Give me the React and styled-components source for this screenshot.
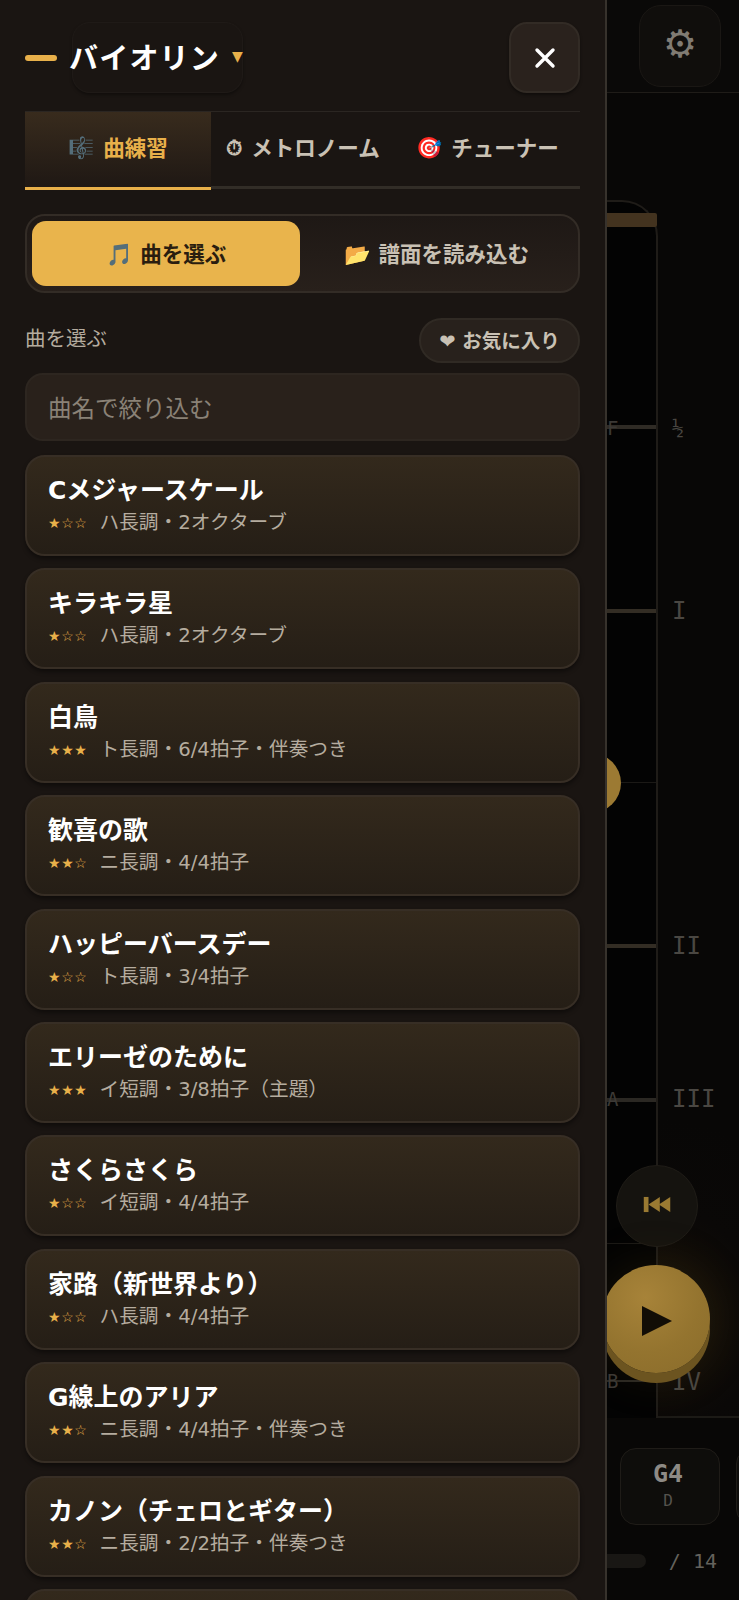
import React from "react";
import styled, { createGlobalStyle } from "styled-components";

const FONT = `"DejaVu Sans", "Noto Sans CJK JP", sans-serif`;
const MONO = `"DejaVu Sans Mono", "Liberation Mono", monospace`;

const Global = createGlobalStyle`
  * { box-sizing: border-box; }
  html, body { margin: 0; padding: 0; background: #080706; }
  body { font-family: ${FONT}; }
`;

const Screen = styled.div`
  position: relative;
  width: 739px;
  height: 1600px;
  overflow: hidden;
  background: #080706;
  display: flex;
  flex-direction: column;
`;

/* ---------- dimmed app behind the drawer ---------- */
const TopBar = styled.header`
  height: 93px;
  flex: none;
  display: flex;
  justify-content: flex-end;
  padding: 5px 18px 0 0;
  border-bottom: 1px solid #1f1c18;
  background: #0a0908;
`;
const GearButton = styled.div`
  width: 82px;
  height: 82px;
  border-radius: 22px;
  border: 1px solid #1a1714;
  background: #100e0c;
  color: #807b73;
  display: flex;
  align-items: center;
  justify-content: center;
  padding-bottom: 5px;
  font-size: 38px;
  line-height: 1;
`;
const Stage = styled.section`
  position: relative;
  height: 1325px;
  flex: none;
  border-bottom: 2px solid #1c1a16;
  background: radial-gradient(circle at 655px 1226px, #181208 0, #0a0807 110px, #080706 200px);
`;
const Neck = styled.div`
  position: absolute;
  left: 300px;
  top: 107px;
  width: 358px;
  height: 1218px;
  border: 2px solid #1f1c18;
  border-bottom: 0;
  border-radius: 36px 36px 0 0;
  background: #030303;
`;
const Nut = styled.div`
  position: absolute;
  left: 300px;
  top: 120px;
  width: 357px;
  height: 14px;
  border-radius: 0 2px 2px 0;
  background: #43331f;
`;
const Fret = styled.div`
  position: absolute;
  left: 300px;
  width: 356px;
  height: ${(p) => p.$h}px;
  background: ${(p) => p.$c};
`;
const FretLabel = styled.span`
  position: absolute;
  left: 672px;
  transform: translateY(-50%);
  font: 24px ${MONO};
  color: #4a4742;
  line-height: 1;
`;
const StringNote = styled.span`
  position: absolute;
  left: 607px;
  transform: translateY(-50%);
  font: 19px ${MONO};
  color: #3c3935;
  line-height: 1;
`;
const Dot = styled.div`
  position: absolute;
  left: 560px;
  top: 660px;
  width: 61px;
  height: 60px;
  border-radius: 50%;
  background: #9c7a33;
`;
const RewindButton = styled.div`
  position: absolute;
  left: 616px;
  top: 1072px;
  width: 82px;
  height: 82px;
  border-radius: 50%;
  background: #15130f;
  border: 1px solid #1f1c17;
  display: flex;
  align-items: center;
  justify-content: center;
  padding-bottom: 4px;
  color: #9a7a32;
`;
const PlayButton = styled.div`
  position: absolute;
  left: 602px;
  top: 1172px;
  width: 108px;
  height: 108px;
  border-radius: 50%;
  background: radial-gradient(circle at 40% 30%, #a78339 0, #94742f 55%, #8a6c2b 100%);
  box-shadow: 0 10px 0 #6c5420, 0 0 50px rgba(120, 90, 30, 0.2);
  display: flex;
  align-items: center;
  justify-content: center;
`;
const NotesStrip = styled.div`
  flex: none;
  height: 122px;
  padding: 30px 0 0 504px;
  display: flex;
  gap: 16px;
  overflow: hidden;
`;
const NoteCard = styled.div`
  width: 100px;
  height: 77px;
  flex: none;
  border: 1px solid #1f1c18;
  border-radius: 16px;
  background: #0e0d0b;
  display: flex;
  flex-direction: column;
  align-items: center;
  justify-content: flex-start;
  padding: 10px 4px 0 0;
  font-family: ${MONO};
`;
const NoteName = styled.span`
  font-size: 25px;
  font-weight: 700;
  color: #8d8a85;
  line-height: 30px;
`;
const NoteFinger = styled.span`
  font-size: 16px;
  color: #55534e;
  line-height: 23px;
`;
const ProgressRow = styled.div`
  flex: 1;
  display: flex;
  align-items: flex-start;
  padding: 8px 22px 0 300px;
  gap: 23px;
`;
const ProgressTrack = styled.div`
  flex: 1;
  height: 14px;
  margin-top: 6px;
  border-radius: 7px;
  background: #191714;
`;
const ProgressCount = styled.span`
  font: 20px ${MONO};
  color: #64625c;
  line-height: 26px;
  white-space: pre;
`;

/* ---------- drawer ---------- */
const Drawer = styled.aside`
  position: absolute;
  left: 0;
  top: 0;
  width: 607px;
  height: 1600px;
  overflow: hidden;
  padding: 0 25px;
  background: #1a1512;
  border-right: 2px solid #37322c;
  display: flex;
  flex-direction: column;
`;
const DrawerHeader = styled.div`
  height: 111px;
  flex: none;
  display: flex;
  align-items: flex-start;
  padding-top: 22px;
`;
const Handle = styled.span`
  width: 32px;
  height: 6px;
  margin-top: 33px;
  border-radius: 3px;
  background: #e8b04a;
`;
const InstrumentButton = styled.div`
  margin-left: 15px;
  width: 171px;
  height: 71px;
  padding-bottom: 4px;
  border-radius: 18px;
  border: 1px solid #1f1a17;
  box-shadow: 0 2px 3px rgba(0, 0, 0, 0.35);
  display: flex;
  align-items: center;
  color: #fff;
  font-size: 29px;
  font-weight: 700;
  letter-spacing: 1.2px;
  white-space: nowrap;
`;
const InstrumentName = styled.span`
  margin-left: -4px;
`;
const Caret = styled.span`
  margin-left: 12px;
  font-size: 14px;
  letter-spacing: 0;
  color: #e8b04a;
`;
const CloseButton = styled.div`
  margin-left: auto;
  width: 71px;
  height: 71px;
  border-radius: 18px;
  border: 2px solid #322b25;
  background: #2a221d;
  box-shadow: 0 2px 3px rgba(0, 0, 0, 0.4);
  display: flex;
  align-items: center;
  justify-content: center;
  color: #fff;
`;
const Tabs = styled.nav`
  height: 78px;
  flex: none;
  display: grid;
  grid-template-columns: 186px 1fr 185px;
  border-top: 1px solid #2b2622;
  border-bottom: 3px solid #322d27;
`;
const Tab = styled.div`
  height: 78px;
  margin-bottom: -3px;
  display: flex;
  align-items: center;
  justify-content: center;
  gap: 9px;
  font-size: 21.5px;
  font-weight: 700;
  white-space: nowrap;
  padding-bottom: 6px;
  color: ${(p) => (p.$active ? "#e8b04a" : "#c9c1b4")};
  background: ${(p) => (p.$active ? "linear-gradient(180deg, #382b1d, #1f1814)" : "transparent")};
  border-bottom: 3px solid ${(p) => (p.$active ? "#e8b04a" : "transparent")};
`;
const TabIcon = styled.span`
  font-size: 21px;
  font-weight: 700;
  margin-top: 3px;
`;
const ModeToggle = styled.div`
  margin-top: 25px;
  height: 79px;
  flex: none;
  display: grid;
  grid-template-columns: 268px 1fr;
  padding: 5px;
  border: 2px solid #332c26;
  border-radius: 20px;
  background: linear-gradient(180deg, #1e1815, #28201b);
`;
const ModeButton = styled.div`
  display: flex;
  align-items: center;
  justify-content: center;
  padding-bottom: 3px;
  border-radius: 14px;
  font-size: 21.5px;
  font-weight: 700;
  white-space: pre;
  color: ${(p) => (p.$active ? "#2a1d0f" : "#c9c1b4")};
  background: ${(p) => (p.$active ? "#e9b44c" : "transparent")};
`;
const LabelRow = styled.div`
  margin-top: 25px;
  height: 45px;
  flex: none;
  display: flex;
  align-items: center;
  justify-content: space-between;
`;
const SectionLabel = styled.span`
  font-size: 20.5px;
  color: #b5ac9f;
  margin-top: -7px;
`;
const FavButton = styled.div`
  width: 161px;
  height: 45px;
  padding-bottom: 3px;
  border-radius: 23px;
  border: 2px solid #302a24;
  background: #28211c;
  display: flex;
  align-items: center;
  justify-content: center;
  gap: 6px;
  color: #c9c1b4;
  font-size: 19.5px;
  font-weight: 700;
  white-space: nowrap;
`;
const SearchInput = styled.input`
  margin-top: 10px;
  width: 100%;
  height: 68px;
  flex: none;
  padding: 3px 21px 0;
  border: 2px solid #2d2620;
  border-radius: 18px;
  background: #29211b;
  outline: none;
  color: #fff;
  font-family: ${FONT};
  font-size: 23.5px;
  &::placeholder { color: #8a8277; opacity: 1; }
`;
const SongList = styled.div`
  margin-top: 14px;
  display: flex;
  flex-direction: column;
  gap: 12.4px;
`;
const SongCard = styled.div`
  height: 101px;
  flex: none;
  padding: 17px 21px 0;
  border: 2px solid #372e25;
  border-radius: 20px;
  background: linear-gradient(180deg, #33291c, #251e16);
  box-shadow: 0 3px 4px rgba(0, 0, 0, 0.4);
`;
const SongTitle = styled.div`
  font-size: 25px;
  font-weight: 700;
  line-height: 33px;
  color: #fff;
  white-space: nowrap;
`;
const SongMeta = styled.div`
  display: flex;
  align-items: center;
  gap: 12px;
  margin-top: 2px;
  font-size: 19.7px;
  line-height: 28px;
  color: #b5ac9f;
  white-space: nowrap;
`;
const Stars = styled.span`
  font-size: 14px;
  letter-spacing: 0.6px;
  color: #e8b04a;
`;

const Rating = ({ n }) => (
  <Stars>
    {"★".repeat(n)}
    {"☆".repeat(3 - n)}
  </Stars>
);

const songs = [
  ["Cメジャースケール", 1, "ハ長調・2オクターブ"],
  ["キラキラ星", 1, "ハ長調・2オクターブ"],
  ["白鳥", 3, "ト長調・6/4拍子・伴奏つき"],
  ["歓喜の歌", 2, "ニ長調・4/4拍子"],
  ["ハッピーバースデー", 1, "ト長調・3/4拍子"],
  ["エリーゼのために", 3, "イ短調・3/8拍子（主題）"],
  ["さくらさくら", 1, "イ短調・4/4拍子"],
  ["家路（新世界より）", 1, "ハ長調・4/4拍子"],
  ["G線上のアリア", 2, "ニ長調・4/4拍子・伴奏つき"],
  ["カノン（チェロとギター）", 2, "ニ長調・2/2拍子・伴奏つき"],
];

const frets = [
  [332, 4, "#2f2b25"],
  [516, 4, "#332d24"],
  [689, 1, "#1b1916"],
  [851, 4, "#332d24"],
  [1005, 4, "#2b2823"],
  [1150, 1, "#1b1916"],
  [1287, 2, "#2a2823"],
];
const romans = [
  ["I", 518],
  ["II", 853],
  ["III", 1006],
  ["IV", 1289],
];
const strings = [
  ["F", 335],
  ["A", 1006],
  ["B", 1288],
];

export default function App() {
  return (
    <Screen>
      <Global />
      <TopBar>
        <GearButton>⚙</GearButton>
      </TopBar>
      <Stage>
        <Neck />
        <Nut />
        {frets.map(([top, h, c]) => (
          <Fret key={top} style={{ top }} $h={h} $c={c} />
        ))}
        <Dot />
        <FretLabel style={{ top: 335, fontSize: 20 }}>½</FretLabel>
        {romans.map(([t, top]) => (
          <FretLabel key={t} style={{ top }}>{t}</FretLabel>
        ))}
        {strings.map(([t, top]) => (
          <StringNote key={t} style={{ top }}>{t}</StringNote>
        ))}
        <RewindButton>
          <svg width="28" height="17" viewBox="0 0 28 18" fill="currentColor">
            <rect x="0" y="1" width="5" height="16" />
            <polygon points="5,9 17,1 17,17" />
            <polygon points="16,9 28,1 28,17" />
          </svg>
        </RewindButton>
        <PlayButton>
          <svg width="30" height="30" viewBox="0 0 30 30" fill="#120d06" style={{ marginLeft: 2, marginTop: 4 }}>
            <polygon points="0,0 30,15 0,30" />
          </svg>
        </PlayButton>
      </Stage>
      <NotesStrip>
        <NoteCard />
        <NoteCard>
          <NoteName>G4</NoteName>
          <NoteFinger>D</NoteFinger>
        </NoteCard>
        <NoteCard />
      </NotesStrip>
      <ProgressRow>
        <ProgressTrack />
        <ProgressCount>/ 14</ProgressCount>
      </ProgressRow>

      <Drawer>
        <DrawerHeader>
          <Handle />
          <InstrumentButton>
            <InstrumentName>バイオリン</InstrumentName>
            <Caret>▼</Caret>
          </InstrumentButton>
          <CloseButton>
            <svg width="22" height="22" viewBox="0 0 22 22" stroke="currentColor" strokeWidth="3.4" strokeLinecap="round">
              <path d="M3 3 L19 19 M19 3 L3 19" />
            </svg>
          </CloseButton>
        </DrawerHeader>
        <Tabs>
          <Tab $active>
            <TabIcon>🎼</TabIcon>曲練習
          </Tab>
          <Tab>
            <TabIcon>⏱</TabIcon>メトロノーム
          </Tab>
          <Tab>
            <TabIcon>🎯</TabIcon>チューナー
          </Tab>
        </Tabs>
        <ModeToggle>
          <ModeButton $active>🎵 曲を選ぶ</ModeButton>
          <ModeButton>📂 譜面を読み込む</ModeButton>
        </ModeToggle>
        <LabelRow>
          <SectionLabel>曲を選ぶ</SectionLabel>
          <FavButton>❤ お気に入り</FavButton>
        </LabelRow>
        <SearchInput placeholder="曲名で絞り込む" readOnly />
        <SongList>
          {songs.map(([title, n, meta]) => (
            <SongCard key={title}>
              <SongTitle>{title}</SongTitle>
              <SongMeta>
                <Rating n={n} />
                <span>{meta}</span>
              </SongMeta>
            </SongCard>
          ))}
          <SongCard />
        </SongList>
      </Drawer>
    </Screen>
  );
}
